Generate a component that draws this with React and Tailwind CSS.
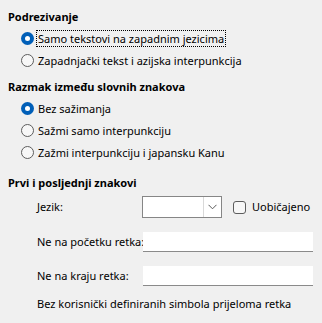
import React from 'react';

const Radio = ({ checked, label, focused }) => (
  <div className="flex items-center h-[22px] pl-[21px]">
    {checked ? (
      <span className="w-[13px] h-[13px] rounded-full bg-[#005fb8] flex items-center justify-center shrink-0">
        <span className="w-[5px] h-[5px] rounded-full bg-white" />
      </span>
    ) : (
      <span className="w-[13px] h-[13px] rounded-full border border-[#5d5d5d] bg-[#f7f7f7] shrink-0" />
    )}
    <span
      className={`ml-[3px] leading-[15px] px-px ${focused ? 'outline outline-1 outline-dotted outline-black' : ''}`}
    >
      {label}
    </span>
  </div>
);

const Heading = ({ children, className = '' }) => (
  <div className={`h-5 flex items-center pl-2 font-bold ${className}`}>{children}</div>
);

export default function App() {
  return (
    <div
      className="w-[322px] h-[323px] bg-[#f0f0f0] text-black text-[11px] pt-[7px] overflow-hidden whitespace-nowrap"
      style={{ fontFamily: '"Noto Sans", "Open Sans", sans-serif' }}
    >
      <Heading>Podrezivanje</Heading>
      <Radio checked focused label="Samo tekstovi na zapadnim jezicima" />
      <Radio label="Zapadnjački tekst i azijska interpunkcija" />

      <Heading className="mt-[6px]">Razmak između slovnih znakova</Heading>
      <Radio checked label="Bez sažimanja" />
      <Radio label="Sažmi samo interpunkciju" />
      <Radio label="Zažmi interpunkciju i japansku Kanu" />

      <Heading className="mt-[10px]">Prvi i posljednji znakovi</Heading>

      {/* Jezik */}
      <div className="flex items-center h-[22px] mt-[3px] pl-[37px]">
        <span className="w-[105px]">Jezik:</span>
        <div className="flex w-[80px] h-[22px] border border-[#868686] bg-white">
          <div className="flex-1" />
          <div className="w-[18px] border-l border-[#d9d9d9] flex items-center justify-center">
            <svg width="9" height="6" viewBox="0 0 9 6" fill="none">
              <path d="M0.5 0.8 L4.5 4.8 L8.5 0.8" stroke="#5a5a5a" strokeWidth="1" />
            </svg>
          </div>
        </div>
        <span className="ml-[11px] w-[13px] h-[13px] rounded-[3px] border border-[#5d5d5d] bg-[#f7f7f7]" />
        <span className="ml-[6px]">Uobičajeno</span>
      </div>

      <div className="flex items-center h-5 mt-[14px] pl-[37px]">
        <span className="w-[106px]">Ne na početku retka:</span>
        <div className="w-[170px] h-5 bg-white border-b border-[#8a8a8a]" />
      </div>

      <div className="flex items-center h-5 mt-[14px] pl-[37px]">
        <span className="w-[106px]">Ne na kraju retka:</span>
        <div className="w-[170px] h-5 bg-white border-b border-[#8a8a8a]" />
      </div>

      <div className="h-5 mt-2 pl-[37px] flex items-center">
        Bez korisnički definiranih simbola prijeloma retka
      </div>
    </div>
  );
}
